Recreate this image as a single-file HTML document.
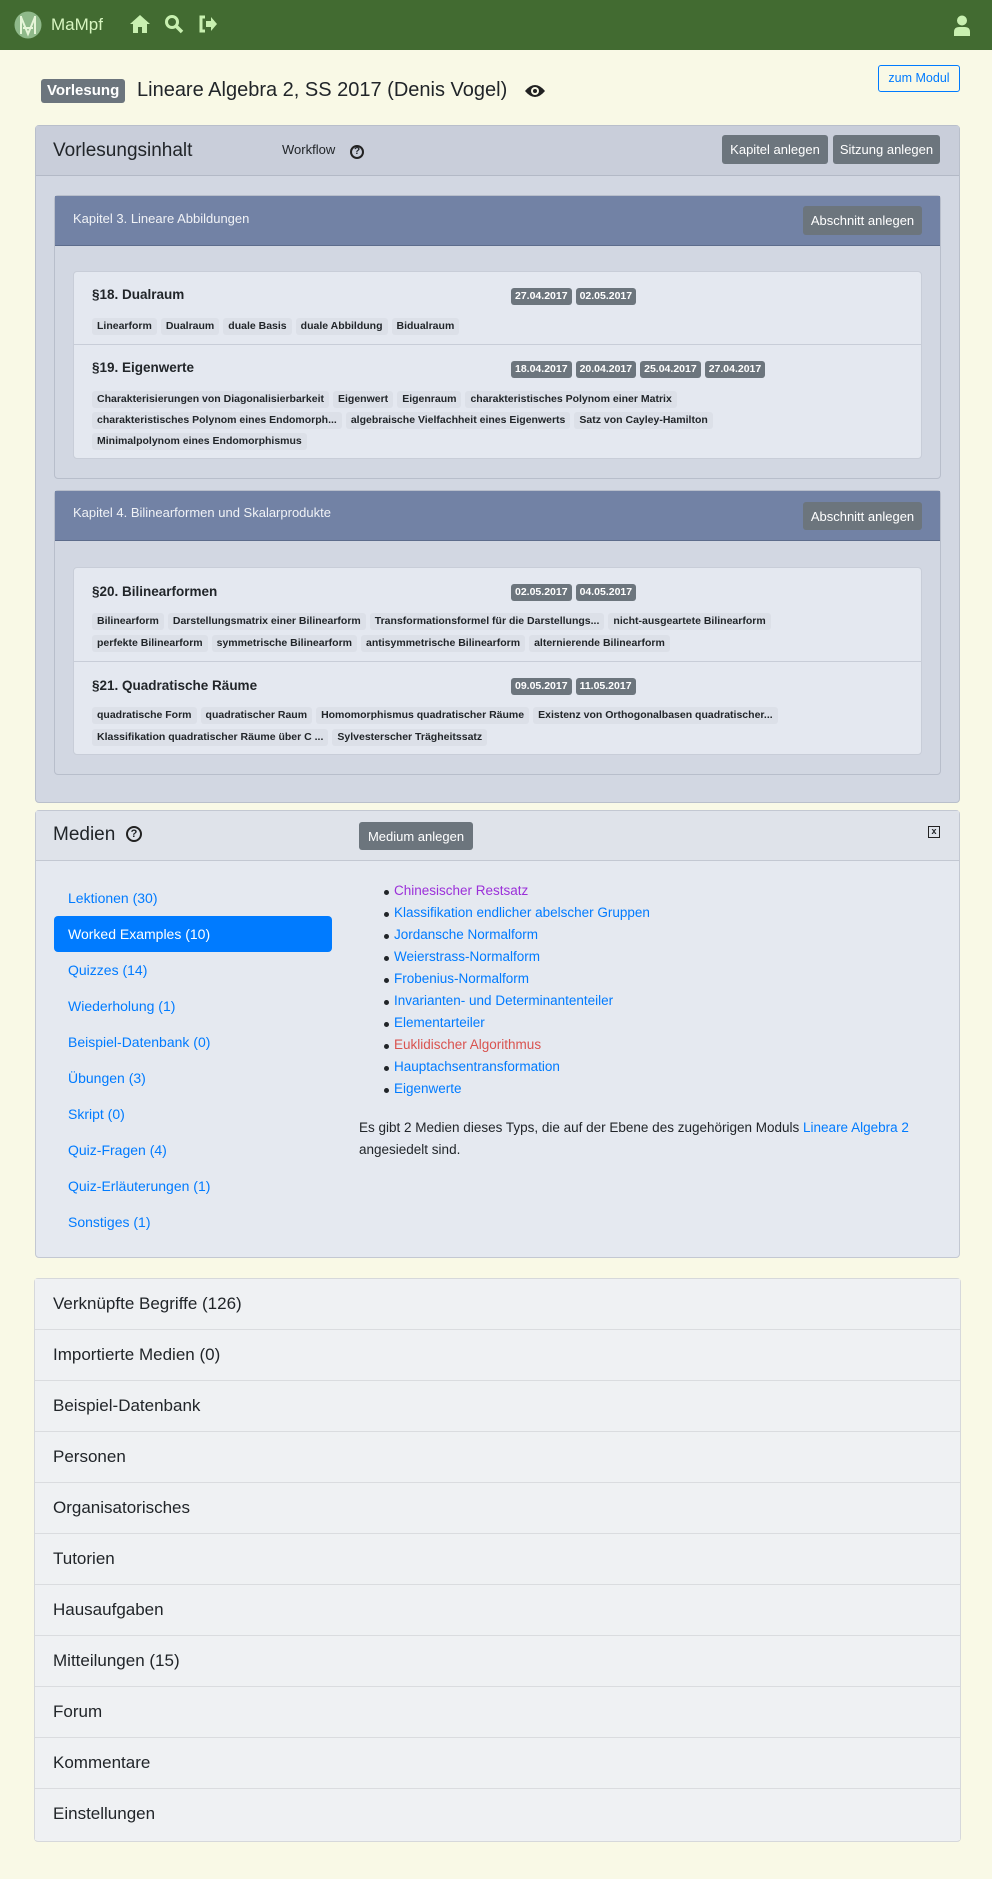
<!DOCTYPE html>
<html><head><meta charset="utf-8"><style>
*{box-sizing:border-box;margin:0;padding:0}
body{width:992px;height:1879px;background:#f9f9e6;font-family:"Liberation Sans",sans-serif;color:#212529;position:relative;overflow:hidden}
.a{position:absolute;white-space:nowrap}
.btn{position:absolute;background:#6c757d;color:#fff;border-radius:3px;font-size:13px;display:flex;align-items:center;justify-content:center}
.tag{display:inline-block;background:#dce0e8;border-radius:3px;font-size:10.5px;font-weight:bold;padding:2px 5px;margin-right:4px;line-height:13px}
.row{position:absolute;left:92px;white-space:nowrap}
.date{display:inline-block;background:#6c757d;color:#fff;border-radius:3px;font-size:10.5px;font-weight:bold;padding:2px 4px;margin-right:4px;line-height:13px}
.st{position:absolute;left:92px;font-size:13.5px;font-weight:bold}
.ds{position:absolute;left:511px}
.ml{position:absolute;left:68px;font-size:14px;color:#007bff}
.rl{position:absolute;left:384px;font-size:13.5px;color:#007bff}
.rl:before{content:"";position:absolute;left:0;top:7px;width:5px;height:5px;border-radius:50%;background:#212529}
.rl span{margin-left:10px}
.acc{position:absolute;left:35px;width:925px;height:51px;border-bottom:1px solid #dadcdf;font-size:17px;padding:15px 18px;background:#eff1f3}
.hlp{display:inline-block;width:14px;height:14px;border:2px solid #222;border-radius:50%;font-size:10px;font-weight:bold;text-align:center;line-height:10px}
</style></head><body>
<div class="a" style="left:0;top:0;width:992px;height:50px;background:#426b31"></div>
<svg class="a" style="left:14px;top:11px" width="28" height="28" viewBox="0 0 28 28"><circle cx="14" cy="14" r="13.5" fill="#8fb98a"/><path d="M7 5v18M21 5v18M7 6l7 17 7-17M9 17h10" stroke="#e6f5d8" stroke-width="2" fill="none"/></svg>
<div class="a" style="left:51px;top:15px;font-size:17px;color:#d7f5c0">MaMpf</div>
<svg class="a" style="left:129px;top:14px" width="22" height="20" viewBox="0 0 22 20"><path d="M11 1L1 10h3v9h5v-6h4v6h5v-9h3z" fill="#c8f0b0"/></svg>
<svg class="a" style="left:164px;top:14px" width="20" height="20" viewBox="0 0 20 20"><circle cx="8" cy="8" r="5.5" stroke="#c8f0b0" stroke-width="3" fill="none"/><path d="M12 12l6 6" stroke="#c8f0b0" stroke-width="3.5"/></svg>
<svg class="a" style="left:198px;top:15px" width="20" height="18" viewBox="0 0 20 18"><path d="M7 2H3v14h4" stroke="#c8f0b0" stroke-width="3" fill="none"/><path d="M8 6h5V2l6 7-6 7v-4H8z" fill="#c8f0b0"/></svg>
<svg class="a" style="left:953px;top:15px" width="18" height="21" viewBox="0 0 18 21"><circle cx="9" cy="5.5" r="5" fill="#c8f0b0"/><path d="M1 21v-4q0-5 5-5h6q5 0 5 5v4z" fill="#c8f0b0"/></svg>

<div class="a" style="left:878px;top:65px;width:82px;height:27px;border:1px solid #007bff;border-radius:3px;color:#007bff;font-size:12.5px;text-align:center;line-height:25px">zum Modul</div>
<div class="a" style="left:41px;top:79px;height:24px;background:#6c757d;color:#fff;border-radius:3px;font-size:15px;font-weight:bold;padding:0 6px;line-height:24px">Vorlesung</div>
<div class="a" style="left:137px;top:79px;font-size:20px">Lineare Algebra 2, SS 2017 (Denis Vogel)</div>
<svg class="a" style="left:524px;top:82px" width="22" height="18" viewBox="0 0 22 18"><path d="M1 9Q11-3 21 9Q11 21 1 9z" fill="#222"/><circle cx="11" cy="9" r="4" fill="#f9f9e6"/><circle cx="11" cy="9" r="2" fill="#222"/></svg>

<!-- Vorlesungsinhalt -->
<div class="a" style="left:35px;top:125px;width:925px;height:678px;background:#d2d7e2;border:1px solid #b9bfcb;border-radius:4px"></div>
<div class="a" style="left:36px;top:126px;width:923px;height:50px;background:#c9ceda;border-bottom:1px solid #b3b9c6"></div>
<div class="a" style="left:53px;top:140px;font-size:19px">Vorlesungsinhalt</div>
<div class="a" style="left:282px;top:142px;font-size:13px">Workflow</div>
<div class="a" style="left:350px;top:141px"><span class="hlp">?</span></div>
<div class="btn" style="left:722px;top:135px;width:106px;height:29px">Kapitel anlegen</div>
<div class="btn" style="left:833px;top:135px;width:107px;height:29px">Sitzung anlegen</div>

<!-- Kapitel 3 -->
<div class="a" style="left:54px;top:195px;width:887px;height:284px;border:1px solid #b8becb;border-radius:4px;background:#d2d7e2"></div>
<div class="a" style="left:55px;top:196px;width:885px;height:50px;background:#7282a5;border-bottom:1px solid #5d6c8c"></div>
<div class="a" style="left:73px;top:211px;font-size:13px;color:#f0f2f6">Kapitel 3. Lineare Abbildungen</div>
<div class="btn" style="left:803px;top:206px;width:119px;height:29px">Abschnitt anlegen</div>
<div class="a" style="left:73px;top:271px;width:849px;height:188px;background:#e4e8f0;border:1px solid #c8cdd8;border-radius:4px"></div>
<div class="a" style="left:74px;top:344px;width:847px;height:1px;background:#c8cdd8"></div>
<div class="st" style="top:287px">§18. Dualraum</div>
<div class="ds" style="top:286px"><span class="date">27.04.2017</span><span class="date">02.05.2017</span></div>
<div class="row" style="top:316px"><span class="tag">Linearform</span><span class="tag">Dualraum</span><span class="tag">duale Basis</span><span class="tag">duale Abbildung</span><span class="tag">Bidualraum</span></div>
<div class="st" style="top:360px">§19. Eigenwerte</div>
<div class="ds" style="top:359px"><span class="date">18.04.2017</span><span class="date">20.04.2017</span><span class="date">25.04.2017</span><span class="date">27.04.2017</span></div>
<div class="row" style="top:389px"><span class="tag">Charakterisierungen von Diagonalisierbarkeit</span><span class="tag">Eigenwert</span><span class="tag">Eigenraum</span><span class="tag">charakteristisches Polynom einer Matrix</span></div>
<div class="row" style="top:410px"><span class="tag">charakteristisches Polynom eines Endomorph...</span><span class="tag">algebraische Vielfachheit eines Eigenwerts</span><span class="tag">Satz von Cayley-Hamilton</span></div>
<div class="row" style="top:431px"><span class="tag">Minimalpolynom eines Endomorphismus</span></div>

<!-- Kapitel 4 -->
<div class="a" style="left:54px;top:490px;width:887px;height:285px;border:1px solid #b8becb;border-radius:4px;background:#d2d7e2"></div>
<div class="a" style="left:55px;top:491px;width:885px;height:50px;background:#7282a5;border-bottom:1px solid #5d6c8c"></div>
<div class="a" style="left:73px;top:505px;font-size:13px;color:#f0f2f6">Kapitel 4. Bilinearformen und Skalarprodukte</div>
<div class="btn" style="left:803px;top:502px;width:119px;height:28px">Abschnitt anlegen</div>
<div class="a" style="left:73px;top:567px;width:849px;height:188px;background:#e4e8f0;border:1px solid #c8cdd8;border-radius:4px"></div>
<div class="a" style="left:74px;top:661px;width:847px;height:1px;background:#c8cdd8"></div>
<div class="st" style="top:584px">§20. Bilinearformen</div>
<div class="ds" style="top:582px"><span class="date">02.05.2017</span><span class="date">04.05.2017</span></div>
<div class="row" style="top:611px"><span class="tag">Bilinearform</span><span class="tag">Darstellungsmatrix einer Bilinearform</span><span class="tag">Transformationsformel für die Darstellungs...</span><span class="tag">nicht-ausgeartete Bilinearform</span></div>
<div class="row" style="top:633px"><span class="tag">perfekte Bilinearform</span><span class="tag">symmetrische Bilinearform</span><span class="tag">antisymmetrische Bilinearform</span><span class="tag">alternierende Bilinearform</span></div>
<div class="st" style="top:678px">§21. Quadratische Räume</div>
<div class="ds" style="top:676px"><span class="date">09.05.2017</span><span class="date">11.05.2017</span></div>
<div class="row" style="top:705px"><span class="tag">quadratische Form</span><span class="tag">quadratischer Raum</span><span class="tag">Homomorphismus quadratischer Räume</span><span class="tag">Existenz von Orthogonalbasen quadratischer...</span></div>
<div class="row" style="top:727px"><span class="tag">Klassifikation quadratischer Räume über C ...</span><span class="tag">Sylvesterscher Trägheitssatz</span></div>

<!-- Medien -->
<div class="a" style="left:35px;top:810px;width:925px;height:448px;background:#e5e9f0;border:1px solid #c3c8d2;border-radius:4px"></div>
<div class="a" style="left:36px;top:811px;width:923px;height:50px;background:#dfe3ea;border-bottom:1px solid #c3c8d2"></div>
<div class="a" style="left:53px;top:824px;font-size:19px">Medien</div>
<div class="a" style="left:126px;top:824px"><span class="hlp" style="width:16px;height:16px;line-height:12px;font-size:11px">?</span></div>
<div class="btn" style="left:359px;top:822px;width:114px;height:28px">Medium anlegen</div>
<div class="a" style="left:928px;top:826px;width:12px;height:12px;border:1.5px solid #222;font-size:9px;font-weight:bold;text-align:center;line-height:9px">x</div>
<div class="a" style="left:54px;top:916px;width:278px;height:36px;background:#007bff;border-radius:4px"></div>
<div class="ml" style="top:890px">Lektionen (30)</div>
<div class="ml" style="top:926px;color:#fff">Worked Examples (10)</div>
<div class="ml" style="top:962px">Quizzes (14)</div>
<div class="ml" style="top:998px">Wiederholung (1)</div>
<div class="ml" style="top:1034px">Beispiel-Datenbank (0)</div>
<div class="ml" style="top:1070px">Übungen (3)</div>
<div class="ml" style="top:1106px">Skript (0)</div>
<div class="ml" style="top:1142px">Quiz-Fragen (4)</div>
<div class="ml" style="top:1178px">Quiz-Erläuterungen (1)</div>
<div class="ml" style="top:1214px">Sonstiges (1)</div>
<div class="rl" style="top:883px;color:#9b30d9"><span>Chinesischer Restsatz</span></div>
<div class="rl" style="top:905px"><span>Klassifikation endlicher abelscher Gruppen</span></div>
<div class="rl" style="top:927px"><span>Jordansche Normalform</span></div>
<div class="rl" style="top:949px"><span>Weierstrass-Normalform</span></div>
<div class="rl" style="top:971px"><span>Frobenius-Normalform</span></div>
<div class="rl" style="top:993px"><span>Invarianten- und Determinantenteiler</span></div>
<div class="rl" style="top:1015px"><span>Elementarteiler</span></div>
<div class="rl" style="top:1037px;color:#d9534f"><span>Euklidischer Algorithmus</span></div>
<div class="rl" style="top:1059px"><span>Hauptachsentransformation</span></div>
<div class="rl" style="top:1081px"><span>Eigenwerte</span></div>
<div class="a" style="left:359px;top:1117px;font-size:13.5px;line-height:22px">Es gibt 2 Medien dieses Typs, die auf der Ebene des zugehörigen Moduls <span style="color:#007bff">Lineare Algebra 2</span><br>angesiedelt sind.</div>

<!-- Accordion -->
<div class="a" style="left:34px;top:1278px;width:927px;height:564px;border:1px solid #d6d8db;border-radius:4px;background:#eff1f3"></div>
<div class="acc" style="top:1279px">Verknüpfte Begriffe (126)</div>
<div class="acc" style="top:1330px">Importierte Medien (0)</div>
<div class="acc" style="top:1381px">Beispiel-Datenbank</div>
<div class="acc" style="top:1432px">Personen</div>
<div class="acc" style="top:1483px">Organisatorisches</div>
<div class="acc" style="top:1534px">Tutorien</div>
<div class="acc" style="top:1585px">Hausaufgaben</div>
<div class="acc" style="top:1636px">Mitteilungen (15)</div>
<div class="acc" style="top:1687px">Forum</div>
<div class="acc" style="top:1738px">Kommentare</div>
<div class="acc" style="top:1789px;border-bottom:none">Einstellungen</div>
</body></html>
